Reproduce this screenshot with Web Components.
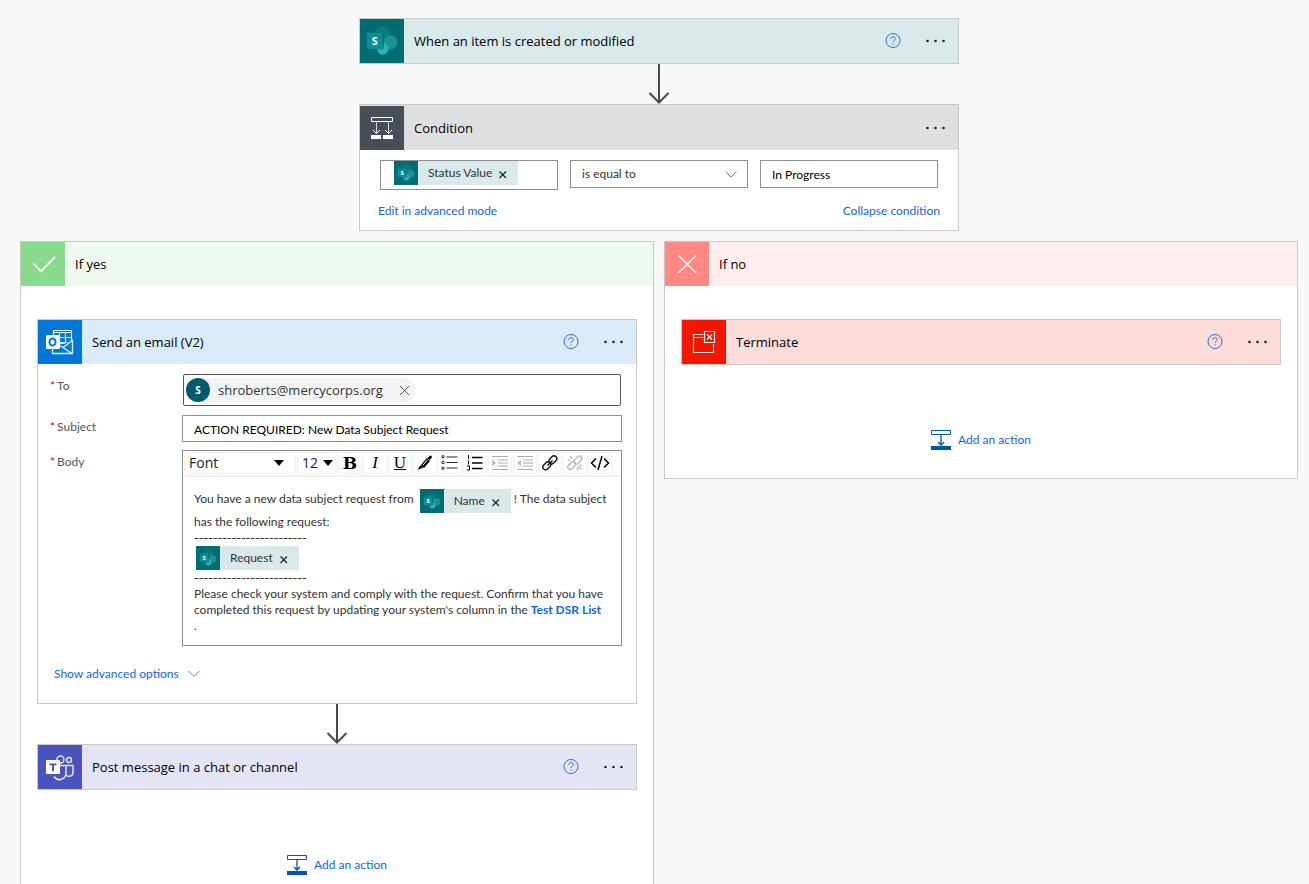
<!DOCTYPE html>
<html lang="en">
<head>
<meta charset="utf-8">
<title>Flow designer</title>
<style>
  html, body { margin: 0; height: 100%; }
  body { background: #f8f8f8; font: 13px/16px "Open Sans", "Noto Sans", sans-serif; color: #000; --small: Lato, "Open Sans", sans-serif; }
</style>
</head>
<body>
<flow-canvas>
  <flow-card slot="trigger" icon="sharepoint" heading="When an item is created or modified" help style="--tile:#036c70;--head:#d9e8e8"></flow-card>
  <flow-arrow slot="trigger"></flow-arrow>
  <flow-card slot="trigger" icon="condition" heading="Condition" style="--tile:#474e58;--head:#dedfe0;--head-pad:1px">
    <condition-editor></condition-editor>
  </flow-card>

  <flow-branch slot="yes" icon="check" heading="If yes" style="--tile:#88da8d;--head:#edf8ef">
    <flow-card icon="outlook" heading="Send an email (V2)" help style="--tile:#0078d7;--head:#d9eaf8">
      <email-form></email-form>
    </flow-card>
    <flow-arrow></flow-arrow>
    <flow-card icon="teams" heading="Post message in a chat or channel" help style="--tile:#4b53bc;--head:#e4e5f4"></flow-card>
  </flow-branch>

  <flow-branch slot="no" icon="cross" heading="If no" style="--tile:#ff8982;--head:#ffecec">
    <flow-card icon="terminate" heading="Terminate" help style="--tile:#f41700;--head:#fddcda"></flow-card>
  </flow-branch>
</flow-canvas>

<script>
const ICONS = {
  sharepoint: `<circle cx="22.300" cy="16" r="8.500" fill="#0c7b80"/><circle cx="30.500" cy="23.500" r="7" fill="#1a9298"/>
    <circle cx="22.700" cy="30" r="5.800" fill="#2bb2be"/><path d="M10 15h14v13.500q0 2-2 2H10z" fill="#00595d" opacity=".5"/>
    <rect x="7" y="14" width="15.500" height="16" rx="1" fill="#0b8f94"/>
    <text x="14.800" y="26" text-anchor="middle" font-family="Open Sans, sans-serif" font-weight="700" font-size="11" fill="#fff">S</text>`,
  condition: `<g fill="none" stroke="#fff"><path d="M11.500 11.500h21v4h-21z"/><path d="M16.500 16v11M28.500 16v11" stroke="#d5d7d9"/>
    <path d="M13 24l3.500 3.500L20 24M25 24l3.500 3.500L32 24"/></g><path d="M11 29h10v4H11zM23 29h10v4H23z" fill="#fff"/>`,
  check: `<path d="M12.500 21.500l7.500 8L34 15" fill="none" stroke="#fff" stroke-width="1.800"/>`,
  cross: `<path d="M13.500 13.500l17.500 17.500M31 13.500L13.500 31" fill="none" stroke="#fff" stroke-width="1.300"/>`,
  outlook: `<g fill="none" stroke="#cfe5f8" stroke-width="1.200"><path d="M15.500 10.500h18v13h-18zM15.500 12.500h18" stroke="#e9f3fc"/>
    <path d="M21.500 12v14M27.500 12v14M16 17.500h17M16 22.500h17"/></g>
    <path d="M15.500 26.500l9-2 10-4v13h-19z" fill="#0078d7"/>
    <path d="M14.500 29v4.500h20v-13L25 27.500l9 6M25 27.500L21 25" fill="none" stroke="#e3f0fb" stroke-width="1.300"/>
    <rect x="8" y="15" width="14" height="14" rx="1" fill="#fff"/>
    <ellipse cx="14.500" cy="22" rx="3" ry="3.500" fill="none" stroke="#0078d7" stroke-width="2"/>`,
  teams: `<g fill="none" stroke="#e1e3f8" stroke-width="1.500"><circle cx="22.500" cy="14.500" r="3.500"/><circle cx="31" cy="15" r="2.500"/>
    <path d="M22 20.500h6v7.500a6.500 6.500 0 0 1-12 3.500"/><path d="M28 20.500h7v6.500a4 4 0 0 1-7 3"/></g>
    <rect x="8" y="15" width="14" height="14" rx="1" fill="#fff"/>
    <path d="M11.500 18.500h7v1.800h-2.500v6h-2v-6h-2.500z" fill="#4b53bc"/>`,
  terminate: `<g fill="none" stroke="#fff" stroke-width="1.200"><path d="M21 14.500h-9.500v18h20V24M11.500 17.500H21" stroke="#ffd9d4"/>
    <path d="M22.500 11.500h10v11h-10zM25 14.500l5 5M30 14.500l-5 5"/></g>`
};
const svg = (w, h, inner, extra = '') =>
  `<svg width="${w}" height="${h}" viewBox="0 0 ${w} ${h}" aria-hidden="true" ${extra}>${inner}</svg>`;
const BASE = `*{box-sizing:border-box} svg{display:block;flex:none}
  button{font:inherit;color:inherit;background:none;border:0;margin:0;padding:0;cursor:pointer}
  a{color:#0f62fe;text-decoration:none}`;
const define = (name, render) => customElements.define(name, class extends HTMLElement {
  constructor() { super(); this.attachShadow({ mode: 'open' }); }
  connectedCallback() { this.shadowRoot.innerHTML = `<style>${BASE}</style>` + render(this); }
});

define('flow-tile', el => `
  <style>:host{display:block;flex:none;width:44px;height:44px;background:var(--tile)}
    :host([small]){width:24px;height:24px;background:#036c70} svg{width:100%;height:100%}</style>
  ${svg(44, 44, ICONS[el.getAttribute('icon')])}`);

define('flow-arrow', () => `
  <style>:host{display:flex;justify-content:center;height:40px}</style>
  ${svg(22, 40, '<path d="M11 0v38M1.500 29l9.500 9.500 9.500-9.500" fill="none" stroke="#484848" stroke-width="2"/>')}`);

define('flow-card', el => `
  <style>
    :host{display:block;width:100%;max-width:600px;box-sizing:border-box;border:1px solid #c8c8c8;background:#fff}
    header{display:flex;align-items:center;padding-top:var(--head-pad,0);background:var(--head)}
    h2{flex:1;margin:0;padding-left:10px;font-size:13px;font-weight:400;line-height:20px}
    .help{width:16px;height:16px;margin-right:24px}
    .more{width:20px;height:20px;margin-right:13px}
  </style>
  <header><flow-tile icon="${el.getAttribute('icon')}"></flow-tile><h2>${el.getAttribute('heading')}</h2>
    ${el.hasAttribute('help') ? `<button class="help" aria-label="Help">${svg(16, 16,
      '<circle cx="8" cy="7.500" r="7" fill="none" stroke="#2b6bf0"/><path d="M5.800 5.800c0-1.400 1-2.200 2.200-2.200s2.200.8 2.200 2c0 1.600-2.100 1.800-2.100 3.500" fill="none" stroke="#2b6bf0"/><circle cx="8.100" cy="11.100" r=".7" fill="#2b6bf0"/>')}</button>` : ''}
    <button class="more" aria-label="More">${svg(20, 20,
      '<g fill="#222"><circle cx="2.500" cy="10" r="1.300"/><circle cx="10.500" cy="10" r="1.300"/><circle cx="18.500" cy="10" r="1.300"/></g>')}</button>
  </header><slot></slot>`);

define('flow-token', () => `
  <style>
    :host{display:inline-flex;flex:none;align-items:center;height:24px;background:#d9e8e8;color:#333;vertical-align:middle;font:12px/24px var(--small)}
    span{padding:0 6px 0 10px} button{width:10px;height:10px;margin:3px 10px 0 0}
  </style>
  <flow-tile small icon="sharepoint"></flow-tile><span><slot></slot></span>
  <button aria-label="Remove">${svg(10, 10, '<path d="M1.500 1.500l6.500 6.500M8 1.500l-6.500 6.500" stroke="#222" stroke-width="1.200"/>')}</button>`);

define('add-action', () => `
  <style>:host{display:flex;justify-content:center} button{display:flex;align-items:center;gap:7px;font:12px/20px var(--small);color:#0f62fe}</style>
  <button>${svg(20, 20, '<path d="M.5.500h19v4H.5z" fill="#fff" stroke="#0058ad"/><path d="M10 5v10M7 12l3 3 3-3" fill="none" stroke="#0058ad" stroke-width="1.300"/><path d="M0 16h20v4H0z" fill="#0058ad"/>')}Add an action</button>`);

define('flow-branch', el => `
  <style>
    :host{display:block;border:1px solid #c8c8c8;background:#fff}
    header{display:flex;align-items:center;background:var(--head)}
    h2{margin:0;padding-left:10px;font-size:13px;font-weight:400;line-height:20px}
    .steps{display:flex;flex-direction:column;align-items:center;padding:33px 16px 28px}
    add-action{margin-top:65px}
  </style>
  <header><flow-tile icon="${el.getAttribute('icon')}"></flow-tile><h2>${el.getAttribute('heading')}</h2></header>
  <div class="steps"><slot></slot><add-action></add-action></div>`);

define('condition-editor', () => `
  <style>
    :host{display:block;padding:10px 20px;font:12px/16px var(--small)}
    .row{display:grid;grid-template-columns:repeat(3,1fr);gap:12px;align-items:start}
    .field{display:flex;height:30px;padding-left:13px;border:1px solid #8f8f8f;background:#fff}
    .pick{display:grid;align-items:center}
    .pick>*{grid-area:1/1}
    .pick svg{justify-self:end;margin-right:10px;pointer-events:none}
    select,input{width:100%;height:28px;margin:0;padding:0 11px;border:1px solid #8f8f8f;border-radius:0;background:#fff;
      font:12px/16px var(--small);color:#000;appearance:none;outline:0}
    select{color:#333}
    .links{display:flex;justify-content:space-between;margin:13px -2px 1px;line-height:16px}
  </style>
  <div class="row">
    <div class="field" role="group" aria-label="Value"><flow-token>Status Value</flow-token></div>
    <div class="pick"><select aria-label="Operator"><option>is equal to</option></select>
      ${svg(14, 8, '<path d="M1.500 1.500l5.500 5.500 5.500-5.500" fill="none" stroke="#777"/>')}</div>
    <input aria-label="Compare with" value="In Progress">
  </div>
  <div class="links"><a href="#">Edit in advanced mode</a><a href="#">Collapse condition</a></div>`);

const TOOLS = [
  ['Pen', '<path d="M1.500 16l3-5 3 2.500z" fill="#000"/><path d="M5 11l6-7 3 3-6 7z" fill="#000"/><path d="M11.500 4L14 1.500q2 0 2 2L13.500 6z" fill="#000"/><path d="M7 11l4.500-5" stroke="#fff"/>'],
  ['Bulleted list', '<g fill="none" stroke="#222"><circle cx="2" cy="2.800" r="1.200"/><circle cx="2" cy="8.500" r="1.200"/><circle cx="2" cy="14.200" r="1.200"/><path d="M5.500 3h11M5.500 8.500h11M5.500 14h11" stroke-width="1.200"/></g>'],
  ['Numbered list', '<path d="M6 3.500h10.500M6 9h10.500M6 14.500h10.500" stroke="#000" stroke-width="1.600"/><path d="M2.500 1v4M2.500 6.500v4M1 12h2.500v4H1" fill="none" stroke="#000"/>'],
  ['Indent', '<path d="M1 2.500h16M7 6h10M7 9h10M7 12h10M1 15.500h16" stroke="#aaa" stroke-width="1.200"/><path d="M1 5.500L5 9l-4 3.500z" fill="#bbb"/>'],
  ['Outdent', '<path d="M1 2.500h16M7 6h10M7 9h10M7 12h10M1 15.500h16" stroke="#aaa" stroke-width="1.200"/><path d="M5 5.500L1 9l4 3.500z" fill="#bbb"/>'],
  ['Link', '<g fill="none" stroke="#111" stroke-width="1.400"><rect x="7.500" y="3" width="9" height="5.500" rx="2.700" transform="rotate(-45 12 6)"/><rect x="1.500" y="9" width="9" height="5.500" rx="2.700" transform="rotate(-45 6 12)"/><path d="M6.500 11.500l5-5"/></g>'],
  ['Unlink', '<g fill="none" stroke="#b5b5b5" stroke-width="1.300"><rect x="7.500" y="3.500" width="9" height="5" rx="2.500" transform="rotate(-45 12 6)"/><rect x="1.500" y="9" width="9" height="5" rx="2.500" transform="rotate(-45 6 12)"/><path d="M4 2l2 3M1.500 5.500l3 1M12 12l3 3M11 13.500l1 3M13.500 11l3 1"/></g>']
];

define('email-form', () => `
  <style>
    :host{display:block;padding:10px 14px 21px 12px;font:12px/16px var(--small)}
    .row{display:grid;grid-template-columns:132px minmax(0,1fr);align-items:start;margin-bottom:9px}
    .row.short{margin-bottom:8px}
    label,.label{display:flex;gap:2px;padding-top:4px;line-height:16px;color:#555}
    i{color:#d8000c;font-style:normal}
    .people{display:flex;align-items:center;height:32px;margin:0 1px;padding:0 2px;border:1px solid #555;border-radius:2px}
    .persona{display:flex;align-items:center;height:24px;padding-right:6px;border-radius:12px;background:#f3f3f3;font:13px/24px "Open Sans",sans-serif;color:#333}
    .persona b{width:24px;height:24px;margin-right:8px;border-radius:50%;background:#005b70;color:#fff;font-size:10px;line-height:24px;text-align:center;font-weight:700}
    .persona button{margin-left:16px}
    .people input{flex:1;min-width:0;height:28px;border:0;outline:0;background:none}
    .subject{width:100%;height:27px;margin:0;padding:2px 11px 0;border:1px solid #8f8f8f;font:12px/16px var(--small);color:#000;outline:0}
    .editor{border:1px solid #8f8f8f}
    .bar{display:flex;gap:1px;padding:1px;border-bottom:2px solid #f0f0f0}
    .bar>*{height:22px;border:1px solid #f0f0f0;border-radius:2px}
    .bar button{display:flex;align-items:center;justify-content:center;width:24px}
    .pick{display:grid;align-items:center}
    .pick>*{grid-area:1/1}
    .pick svg{justify-self:end;pointer-events:none}
    select{width:100%;height:100%;margin:0;padding:0 4px;border:0;background:none;appearance:none;outline:0;font:14px/20px "Open Sans",sans-serif;color:#222}
    .font{width:112px}.size{width:40px}
    .font svg{margin-right:11px}.size svg{margin-right:3px}
    .b{font:700 17px/20px "DejaVu Serif",serif}.i{font:italic 17px/20px "Liberation Serif",serif}.u{font:17px/20px "Liberation Serif",serif;text-decoration:underline}
    .text{padding:11px;line-height:16px;color:#333;outline:0;white-space:nowrap}
    .text div{height:16px}.text .token{display:flex;align-items:start;height:24px;padding-left:2px}
    .text .first{display:flex;height:26px}
    .first flow-token{margin:1px 3px 0 6px}
    .first span{line-height:22px}
    .text .dash{font-family:"DejaVu Sans",sans-serif;font-size:13px}
    .text a{font-weight:700}
    .more{display:flex;align-items:center;gap:9px;margin:20px 0 0 4px;color:#0f62fe;line-height:16px}
  </style>
  <div class="row"><label for="to"><i>*</i>To</label>
    <div class="people"><span class="persona"><b>S</b>shroberts@mercycorps.org
      <button aria-label="Remove recipient">${svg(11, 11, '<path d="M1 1l9 9M10 1l-9 9" stroke="#555"/>')}</button></span><input id="to"></div></div>
  <div class="row short"><label for="subject"><i>*</i>Subject</label><input class="subject" id="subject" value="ACTION REQUIRED: New Data Subject Request"></div>
  <div class="row"><span class="label" id="body-label"><i>*</i>Body</span>
    <div class="editor">
      <div class="bar">
        <div class="pick font"><select aria-label="Font"><option>Font</option></select>${svg(10, 6, '<path d="M0 0h10L5 6z"/>')}</div>
        <div class="pick size"><select aria-label="Font size"><option>12</option></select>${svg(10, 6, '<path d="M0 0h10L5 6z"/>')}</div>
        <button class="b" aria-label="Bold">B</button><button class="i" aria-label="Italic">I</button><button class="u" aria-label="Underline">U</button>
        ${TOOLS.map(([n, d]) => `<button aria-label="${n}">${svg(18, 18, d)}</button>`).join('')}
        <button aria-label="Code view">${svg(20, 16, '<path d="M6 3.500L1.500 8 6 12.500M14 3.500L18.500 8 14 12.500M12 1L8 15" fill="none" stroke="#000" stroke-width="1.500"/>')}</button>
      </div>
      <div class="text" role="textbox" aria-multiline="true" aria-labelledby="body-label">
        <div class="first"><span>You have a new data subject request from</span><flow-token>Name</flow-token><span>! The data subject</span></div>
        <div>has the following request:</div>
        <div class="dash">------------------------</div>
        <div class="token"><flow-token>Request</flow-token></div>
        <div class="dash">------------------------</div>
        <div>Please check your system and comply with the request. Confirm that you have</div>
        <div>completed this request by updating your system's column in the <a href="#">Test DSR List</a></div>
        <div>.</div>
      </div>
    </div></div>
  <button class="more">Show advanced options ${svg(12, 8, '<path d="M.5 1L6 6.500 11.500 1" fill="none" stroke="#5b7fe8"/>')}</button>`);

define('flow-canvas', () => `
  <style>
    :host{display:block;height:100vh;box-sizing:border-box;padding:18px 11px 0 20px;overflow:auto;scrollbar-width:none}
    .top{display:flex;flex-direction:column;align-items:center}
    .branches{display:grid;grid-template-columns:1fr 1fr;gap:10px;align-items:start;margin-top:10px}
  </style>
  <div class="top"><slot name="trigger"></slot></div>
  <div class="branches"><slot name="yes"></slot><slot name="no"></slot></div>`);
</script>
</body>
</html>
